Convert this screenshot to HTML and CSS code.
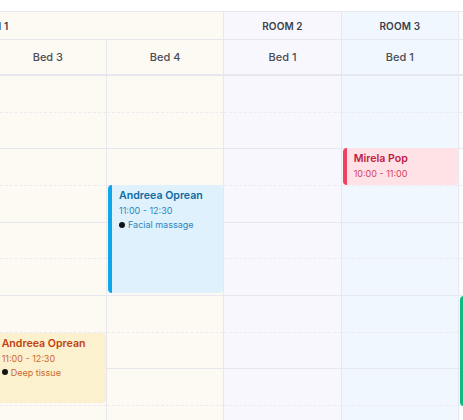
FILE: index.html
```html
<!DOCTYPE html>
<html lang="en">
<head>
<meta charset="utf-8">
<title>Scheduler</title>
<link rel="stylesheet" href="styles.css">
</head>
<body>
<div class="viewport">
  <div class="calendar">
    <div class="room room-1">ROOM 1</div>
    <div class="room room-2">ROOM 2</div>
    <div class="room room-3">ROOM 3</div>
    <div class="room room-4">ROOM 4</div>

    <div class="bed tone-1">Bed 1</div>
    <div class="bed tone-1">Bed 2</div>
    <div class="bed tone-1">Bed 3</div>
    <div class="bed tone-1">Bed 4</div>
    <div class="bed tone-2">Bed 1</div>
    <div class="bed tone-3">Bed 1</div>
    <div class="bed tone-4">Bed 1</div>

    <div class="col tone-1"><div class="slot"></div><div class="slot"></div><div class="slot"></div><div class="slot"></div><div class="slot"></div><div class="slot"></div><div class="slot"></div><div class="slot"></div><div class="slot"></div><div class="slot"></div></div>
    <div class="col tone-1"><div class="slot"></div><div class="slot"></div><div class="slot"></div><div class="slot"></div><div class="slot"></div><div class="slot"></div><div class="slot"></div><div class="slot"></div><div class="slot"></div><div class="slot"></div></div>
    <div class="col tone-1">
      <div class="slot"></div><div class="slot"></div><div class="slot"></div><div class="slot"></div><div class="slot"></div><div class="slot"></div><div class="slot"></div><div class="slot"></div><div class="slot"></div><div class="slot"></div>
      <div class="event event-amber" style="top:256.5px;height:70px">
        <div class="ev-title">Andreea Oprean</div>
        <div class="ev-time">11:00 - 12:30</div>
        <div class="ev-service"><span class="dot"></span>Deep tissue</div>
      </div>
    </div>
    <div class="col tone-1">
      <div class="slot"></div><div class="slot"></div><div class="slot"></div><div class="slot"></div><div class="slot"></div><div class="slot"></div><div class="slot"></div><div class="slot"></div><div class="slot"></div><div class="slot"></div>
      <div class="event event-sky" style="top:109px;height:108px">
        <div class="ev-title">Andreea Oprean</div>
        <div class="ev-time">11:00 - 12:30</div>
        <div class="ev-service"><span class="dot"></span>Facial massage</div>
      </div>
    </div>
    <div class="col tone-2"><div class="slot"></div><div class="slot"></div><div class="slot"></div><div class="slot"></div><div class="slot"></div><div class="slot"></div><div class="slot"></div><div class="slot"></div><div class="slot"></div><div class="slot"></div></div>
    <div class="col tone-3">
      <div class="slot"></div><div class="slot"></div><div class="slot"></div><div class="slot"></div><div class="slot"></div><div class="slot"></div><div class="slot"></div><div class="slot"></div><div class="slot"></div><div class="slot"></div>
      <div class="event event-rose" style="top:71.5px;height:37px">
        <div class="ev-title">Mirela Pop</div>
        <div class="ev-time">10:00 - 11:00</div>
      </div>
    </div>
    <div class="col tone-4">
      <div class="slot"></div><div class="slot"></div><div class="slot"></div><div class="slot"></div><div class="slot"></div><div class="slot"></div><div class="slot"></div><div class="slot"></div><div class="slot"></div><div class="slot"></div>
      <div class="event event-emerald" style="top:220px;height:110px">
        <div class="ev-title">Client</div>
      </div>
    </div>
  </div>
</div>
</body>
</html>
```

FILE: styles.css
```css
html, body {
  margin: 0;
  padding: 0;
  background: #ffffff;
}

body {
  font-family: "Inter", "Noto Sans", sans-serif;
  width: 463px;
  height: 420px;
  overflow: hidden;
}

.viewport {
  width: 463px;
  height: 420px;
  overflow: hidden;
  padding-top: 11px;
  box-sizing: border-box;
}

.calendar {
  display: grid;
  grid-template-columns: repeat(7, 117.333px);
  grid-template-rows: 28px 36px auto;
  width: max-content;
  margin-left: -245px;
  border-top: 1px solid #e7e7f0;
}

.room {
  box-sizing: border-box;
  height: 28px;
  border-bottom: 1px solid #e7e7f0;
  border-right: 1px solid #e7e7f0;
  display: flex;
  align-items: center;
  justify-content: center;
  font-size: 10px;
  font-weight: 600;
  color: #3b3f4a;
  letter-spacing: 0.1px;
}

.room-1 {
  grid-column: span 4;
  background: #fdfaf3;
}

.room-2 { background: #f8f7fd; }
.room-3 { background: #f0f7fe; }
.room-4 { background: #fcfcfd; }

.tone-1 { background: #fdfaf3; }
.tone-2 { background: #f8f7fd; }
.tone-3 { background: #f0f7fe; }
.tone-4 { background: #fcfcfd; }

.bed {
  box-sizing: border-box;
  height: 36px;
  border-bottom: 2px solid #e7e7f0;
  border-right: 1px solid #e7e7f0;
  display: flex;
  align-items: center;
  justify-content: center;
  font-size: 11px;
  font-weight: 500;
  color: #4a4d57;
}

.col {
  position: relative;
  border-right: 1px solid #e7e7f0;
}

.slot {
  box-sizing: border-box;
  height: 36.667px;
  border-bottom: 1px dashed #ebebf0;
}

.slot:nth-child(2n) {
  border-bottom: 1px solid #e7e7ef;
}

.event {
  position: absolute;
  left: 1px;
  right: 0;
  box-sizing: border-box;
  border-radius: 4px;
  border-left: 4px solid transparent;
  padding: 4px 6px 0 7px;
  overflow: hidden;
}

.ev-title {
  font-size: 10.6px;
  font-weight: 600;
  line-height: 14px;
}

.ev-time {
  font-size: 9px;
  line-height: 13px;
  margin-top: 1px;
}

.ev-service {
  font-size: 9px;
  line-height: 13px;
  margin-top: 1px;
  display: flex;
  align-items: center;
  gap: 3px;
}

.dot {
  width: 6px;
  height: 6px;
  border-radius: 50%;
  background: #141414;
  flex: none;
}

.event-sky {
  background: #dff1fc;
  border-left-color: #0ea5e9;
}
.event-sky .ev-title { color: #0b6aa2; }
.event-sky .ev-time,
.event-sky .ev-service { color: #2a86bf; }

.event-rose {
  background: #ffe2e5;
  border-left-color: #f43f5e;
}
.event-rose .ev-title { color: #c01a45; }
.event-rose .ev-time { color: #d3425f; }

.event-amber {
  background: #fbf1cf;
  border-left-color: #f59e0b;
}
.event-amber .ev-title { color: #c2410c; }
.event-amber .ev-time,
.event-amber .ev-service { color: #cd6a2c; }

.event-emerald {
  background: #d1fae5;
  border-left-color: #10b981;
}
.event-emerald .ev-title { color: #047857; }
```
